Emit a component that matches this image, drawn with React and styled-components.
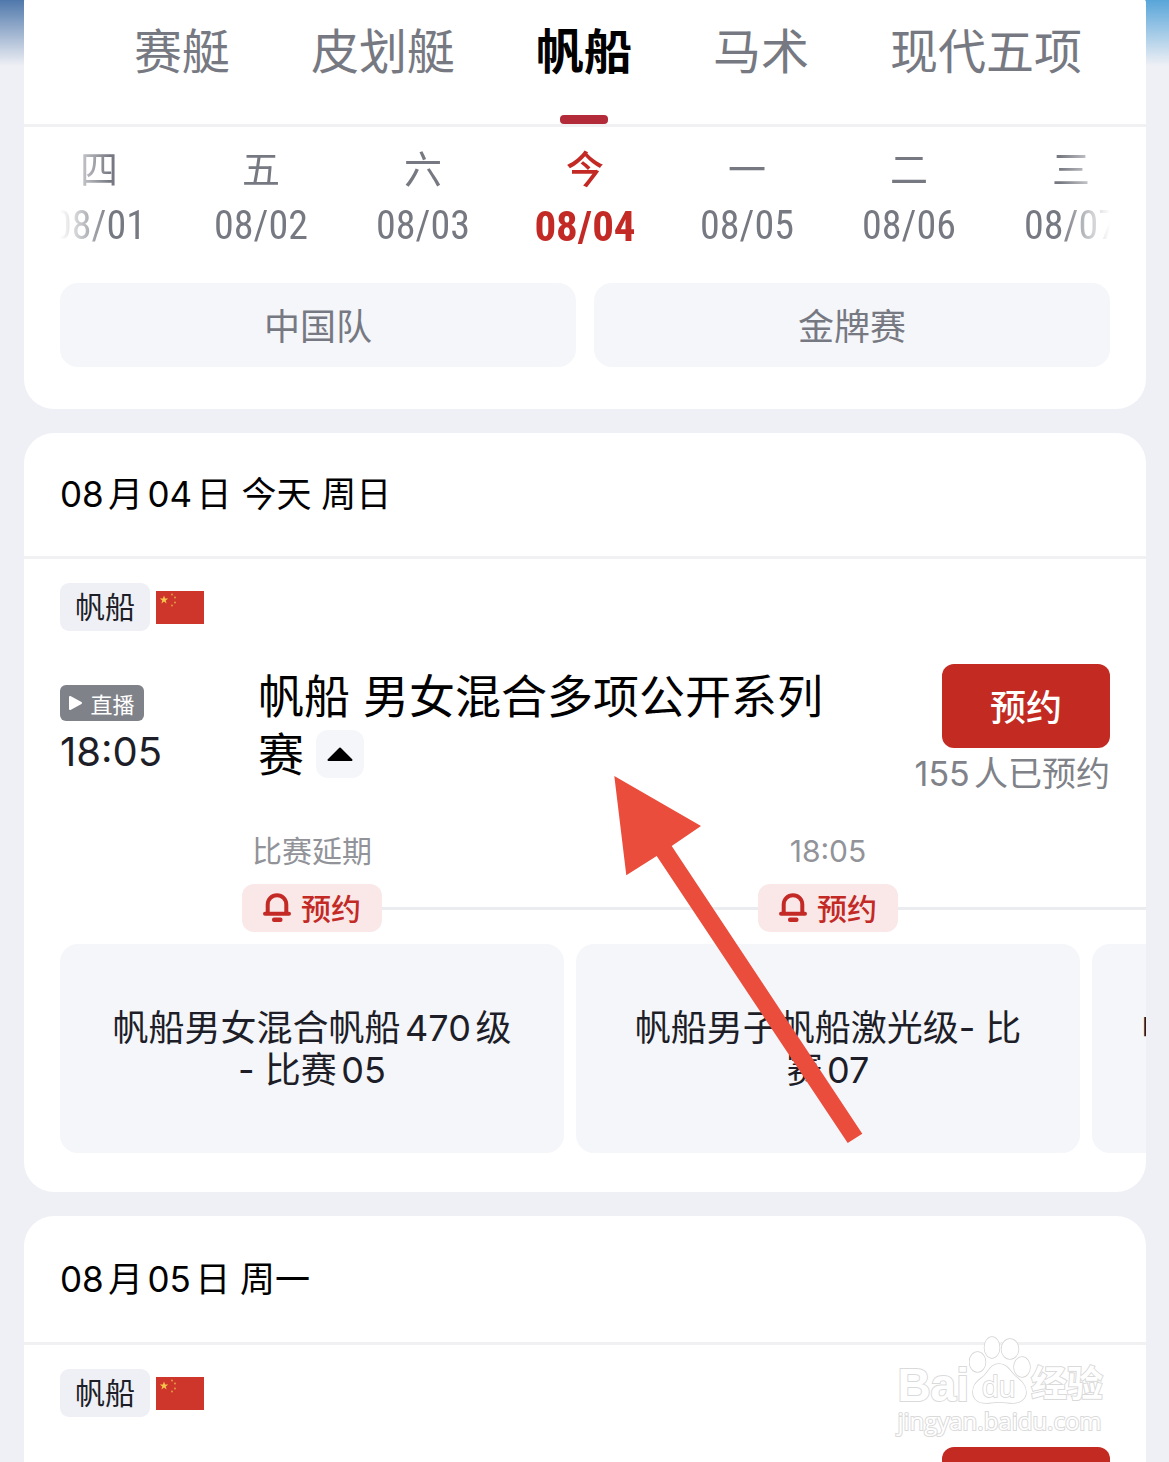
import React from 'react';
import styled, { createGlobalStyle, css } from 'styled-components';

const sports = ['赛艇', '皮划艇', '帆船', '马术', '现代五项'];

const days = [
  { week: '四', date: '08/01' },
  { week: '五', date: '08/02' },
  { week: '六', date: '08/03' },
  { week: '今', date: '08/04' },
  { week: '一', date: '08/05' },
  { week: '二', date: '08/06' },
  { week: '三', date: '08/07' },
];

const filters = ['中国队', '金牌赛'];

const schedule = [
  {
    heading: '08月04日 今天 周日',
    today: true,
    sport: '帆船',
    time: '18:05',
    title: '帆船 男女混合多项公开系列赛',
    booked: '155人已预约',
    races: [
      { status: '比赛延期', name: '帆船男女混合帆船470级\n- 比赛05' },
      { status: '18:05', name: '帆船男子帆船激光级- 比\n赛07' },
      { status: '18:15', name: '帆船男女混合帆船 470级\n- 比赛06' },
    ],
  },
  {
    heading: '08月05日 周一',
    sport: '帆船',
    time: '18:05',
    title: '帆船 男子帆船激光级',
    booked: '98人已预约',
    races: [],
  },
];

const Flag = () => (
  <svg width="48" height="33" viewBox="0 0 48 33" role="img" aria-label="中国">
    <rect width="48" height="33" fill="#ce362c" />
    <path
      d="M8 4.500l1.100 3h3.100l-2.500 1.900.9 3-2.600-1.800-2.600 1.800.9-3L3.800 7.500h3.100z"
      fill="#f3c64b"
    />
    <circle cx="16" cy="3.500" r="1" fill="#e39a40" />
    <circle cx="19" cy="6.500" r="1" fill="#e39a40" />
    <circle cx="19" cy="11.500" r="1" fill="#e39a40" />
    <circle cx="16" cy="14.500" r="1" fill="#e39a40" />
  </svg>
);

const Bell = () => (
  <svg width="28" height="30" viewBox="0 0 28 30" aria-hidden="true">
    <path
      d="M4.700 21V12.500a9.300 9.300 0 0 1 18.600 0V21"
      fill="none"
      stroke="#c32a25"
      strokeWidth="4"
    />
    <path
      d="M2 21.700h24"
      stroke="#c32a25"
      strokeWidth="4"
      strokeLinecap="round"
    />
    <rect x="9" y="25.500" width="10.500" height="4.500" rx="2" fill="#c32a25" />
  </svg>
);

const Event = ({ item }) => {
  const [open, setOpen] = React.useState(true);
  return (
    <Card>
      <CardHeading $today={item.today}>{item.heading}</CardHeading>
      <Tags>
        <Chip>{item.sport}</Chip>
        <Flag />
      </Tags>
      <EventRow>
        <TimeColumn>
          <Live>
            <svg width="13" height="16" viewBox="0 0 13 16" aria-hidden="true">
              <path
                d="M1 2v12l11-6z"
                fill="#fff"
                stroke="#fff"
                strokeWidth="2"
                strokeLinejoin="round"
              />
            </svg>
            直播
          </Live>
          <Time>{item.time}</Time>
        </TimeColumn>
        <Title>
          {item.title}
          {item.races.length > 0 && (
            <Toggle
              type="button"
              aria-label="展开"
              aria-expanded={open}
              onClick={() => setOpen(!open)}
            >
              <svg width="28" height="16" viewBox="0 0 28 16">
                <path
                  d="M14 2.500L25.500 14h-23z"
                  stroke="#000"
                  strokeWidth="2"
                  strokeLinejoin="round"
                />
              </svg>
            </Toggle>
          )}
        </Title>
        <BookColumn>
          <BookButton type="button">预约</BookButton>
          <Booked>{item.booked}</Booked>
        </BookColumn>
      </EventRow>
      {open && item.races.length > 0 && (
        <Races>
          {item.races.map((race, index) => (
            <Race key={index}>
              <Status>{race.status}</Status>
              <PillRow $first={index === 0}>
                <Pill type="button">
                  <Bell />
                  预约
                </Pill>
              </PillRow>
              <RaceName>{race.name}</RaceName>
            </Race>
          ))}
        </Races>
      )}
    </Card>
  );
};

const Watermark = () => (
  <Mark>
    <MarkTop>
      <MarkLatin>Bai</MarkLatin>
      <svg width="62" height="68" viewBox="0 0 62 68" aria-hidden="true">
        <g fill="#fff" stroke="#d4d4d4" strokeWidth="1.500">
          <ellipse cx="8.500" cy="26" rx="8" ry="10" />
          <ellipse cx="23" cy="11.500" rx="7.500" ry="10.500" />
          <ellipse cx="41" cy="13" rx="8.500" ry="10" />
          <ellipse cx="53" cy="31" rx="8" ry="10" />
          <path d="M30 28c-8 0-10 7-15 12-6 5-11 8-11 16s6 11 13 11c5 0 8-1 13-1s9 1 14 1c7 0 13-4 13-11s-5-11-11-16c-5-5-8-12-16-12z" />
          <text
            x="13"
            y="61"
            fontFamily="Liberation Sans, sans-serif"
            fontSize="30"
            strokeWidth="1.500"
          >
            du
          </text>
        </g>
      </svg>
      <MarkHan>经验</MarkHan>
    </MarkTop>
    <MarkUrl>jingyan.baidu.com</MarkUrl>
  </Mark>
);

const App = () => {
  const [sport, setSport] = React.useState('帆船');
  const [day, setDay] = React.useState('08/04');
  return (
    <Page>
      <GlobalStyle />
      <TopCard>
        <Tabs>
          {sports.map((name) => (
            <Tab
              key={name}
              type="button"
              $active={name === sport}
              onClick={() => setSport(name)}
            >
              {name}
            </Tab>
          ))}
        </Tabs>
        <DayStrip>
          {days.map(({ week, date }) => (
            <Day
              key={date}
              type="button"
              $active={date === day}
              onClick={() => setDay(date)}
            >
              <Week $active={date === day}>{week}</Week>
              <DateText $active={date === day}>{date}</DateText>
            </Day>
          ))}
        </DayStrip>
        <Filters>
          {filters.map((name) => (
            <Filter key={name} type="button">
              {name}
            </Filter>
          ))}
        </Filters>
      </TopCard>
      {schedule.map((item) => (
        <Event key={item.heading} item={item} />
      ))}

      <Arrow width="250" height="370" viewBox="0 0 250 370" aria-hidden="true">
        <path
          d="M0.300 0L87 50 57.700 70 248.300 357.700 233.700 367 42.700 80 12.300 99.300z"
          fill="#ea4d3c"
        />
      </Arrow>
      <Watermark />
    </Page>
  );
};

export default App;

/* 390 keeps Inter close to regular while the Han glyphs use the DemiLight cut */
const GlobalStyle = createGlobalStyle`
  * {
    box-sizing: border-box;
  }

  body {
    margin: 0;
    background: #eff0f5;
    font-family: Inter, 'Noto Sans CJK SC', sans-serif;
    font-weight: 390;
    text-autospace: normal;
  }

  button {
    padding: 0;
    border: 0;
    background: none;
    font: inherit;
    color: inherit;
    cursor: pointer;
  }
`;

const Page = styled.main`
  position: relative;
  height: 100vh;
  padding: 0 23px 0 24px;
  overflow: hidden;
  display: flex;
  flex-direction: column;
  gap: 24px;
  background:
    linear-gradient(#4f78ab, #eff0f5) left top / 24px 66px no-repeat,
    linear-gradient(#58a5d9, #eff0f5) right top / 24px 66px no-repeat,
    #eff0f5;
`;

const Card = styled.section`
  flex-shrink: 0;
  border-radius: 30px;
  overflow: hidden;
  background: #fff;
`;

const TopCard = styled(Card)`
  padding-bottom: 42px;
  border-radius: 2px 2px 30px 30px;
`;

const Tabs = styled.nav`
  height: 127px;
  padding-left: 110px;
  display: flex;
  gap: 81px;
  border-bottom: 3px solid #f1f1f3;
`;

const Tab = styled.button`
  position: relative;
  padding-bottom: 20px;
  font-size: 48px;
  line-height: 1;
  white-space: nowrap;
  color: #777982;

  ${({ $active }) =>
    $active &&
    css`
      font-weight: 700;
      color: #000;

      &::after {
        content: '';
        position: absolute;
        left: 50%;
        bottom: 0;
        width: 48px;
        height: 9px;
        margin-left: -24px;
        border-radius: 4px;
        background: #b32a38;
      }
    `}
`;

const DayStrip = styled.div`
  height: 156px;
  margin: 0 36px;
  overflow: hidden;
  display: flex;
  justify-content: center;
  mask-image: linear-gradient(
    to right,
    transparent,
    #000 50px,
    #000 calc(100% - 50px),
    transparent
  );
`;

const Day = styled.button`
  flex: 0 0 162px;
  padding: 18px 0 32px;
  display: flex;
  flex-direction: column;
  align-items: center;
  justify-content: space-between;
  color: ${({ $active }) => ($active ? '#c32a25' : '#777982')};
`;

const Week = styled.span`
  font-size: 38px;
  font-weight: ${({ $active }) => ($active ? 500 : 390)};
  line-height: 48px;
`;

const DateText = styled.span`
  font-family: 'Roboto Condensed', 'Liberation Sans Narrow', sans-serif;
  font-size: ${({ $active }) => ($active ? 43 : 40)}px;
  font-weight: ${({ $active }) => ($active ? 700 : 400)};
  line-height: 50px;
`;

const Filters = styled.div`
  padding: 0 36px;
  display: flex;
  gap: 18px;
`;

const Filter = styled.button`
  flex: 1;
  height: 84px;
  padding-bottom: 2px;
  border-radius: 18px;
  background: #f5f6fa;
  font-size: 36px;
  color: #777982;
`;

const CardHeading = styled.h2`
  margin: 0;
  padding: 0 36px 6px;
  height: ${({ $today }) => ($today ? 126 : 129)}px;
  border-bottom: 3px solid #f1f1f3;
  display: flex;
  align-items: center;
  font-size: 35px;
  font-weight: inherit;
  color: #000;
`;

const Tags = styled.div`
  padding: 24px 36px 30px;
  display: flex;
  align-items: center;
  gap: 6px;
`;

const Chip = styled.span`
  padding: 0 15px;
  border-radius: 9px;
  background: #eff0f5;
  font-size: 30px;
  line-height: 48px;
  color: #1d1e28;
`;

const EventRow = styled.div`
  padding: 0 36px;
  display: flex;
  align-items: center;
`;

const TimeColumn = styled.div`
  flex: 0 0 198px;
`;

const Live = styled.span`
  width: 84px;
  height: 36px;
  border-radius: 6px;
  display: flex;
  align-items: center;
  justify-content: center;
  gap: 8px;
  background: #808289;
  font-size: 22px;
  color: #fff;
`;

const Time = styled.div`
  margin-top: 6px;
  font-size: 40px;
  line-height: 50px;
  color: #1d1e28;
`;

const Title = styled.h3`
  flex: 1;
  margin: 0;
  padding: 6px 80px 18px 0;
  font-size: 46px;
  font-weight: inherit;
  line-height: 58px;
  color: #000;
`;

const Toggle = styled.button`
  width: 48px;
  height: 48px;
  margin: 5px 0 5px 12px;
  border-radius: 12px;
  display: inline-flex;
  align-items: center;
  justify-content: center;
  vertical-align: top;
  background: #f5f6fa;
`;

const BookColumn = styled.div`
  display: flex;
  flex-direction: column;
  align-items: flex-end;
`;

const BookButton = styled.button`
  width: 168px;
  height: 84px;
  padding-bottom: 2px;
  border-radius: 12px;
  background: #c32a22;
  font-size: 36px;
  font-weight: 500;
  color: #fff;
`;

const Booked = styled.span`
  padding-top: 2px;
  font-size: 34px;
  line-height: 48px;
  color: #808289;
`;

const Races = styled.div`
  padding: 29px 36px 39px;
  display: flex;
  gap: 12px;
`;

const Race = styled.div`
  flex: 0 0 504px;
  text-align: center;
`;

const Status = styled.div`
  font-size: 30px;
  line-height: 42px;
  color: #919399;
`;

const PillRow = styled.div`
  margin: 12px -6px;
  display: flex;
  align-items: center;

  &::before,
  &::after {
    content: '';
    flex: 1;
    height: 3px;
    background: #ebecf0;
  }

  &::before {
    ${({ $first }) => $first && 'background: none;'}
  }
`;

const Pill = styled.button`
  width: 140px;
  height: 48px;
  padding-bottom: 2px;
  border-radius: 12px;
  display: flex;
  align-items: center;
  justify-content: center;
  gap: 10px;
  background: #fae8e9;
  font-size: 30px;
  font-weight: 500;
  color: #c32a25;
`;

const RaceName = styled.div`
  height: 209px;
  border-radius: 18px;
  display: flex;
  align-items: center;
  justify-content: center;
  background: #f5f6fa;
  font-size: 36px;
  line-height: 42px;
  white-space: pre-line;
  color: #1d1e28;
`;

const Arrow = styled.svg`
  position: absolute;
  left: 614px;
  top: 776px;
  pointer-events: none;
`;

const Mark = styled.div`
  position: absolute;
  right: 66px;
  bottom: 24px;
  display: flex;
  flex-direction: column;
  color: #fff;
  -webkit-text-stroke: 2px #dadada;
  paint-order: stroke fill;
  pointer-events: none;
`;

const MarkTop = styled.div`
  display: flex;
  align-items: flex-end;
`;

const MarkLatin = styled.span`
  font-family: 'Liberation Sans', sans-serif;
  font-size: 46px;
  font-weight: 700;
  line-height: 38px;
`;

const MarkHan = styled.span`
  font-size: 36px;
  font-weight: 700;
  line-height: 40px;
`;

const MarkUrl = styled.span`
  font-family: 'Open Sans', sans-serif;
  font-size: 24px;
  font-weight: 400;
  line-height: 34px;
`;
